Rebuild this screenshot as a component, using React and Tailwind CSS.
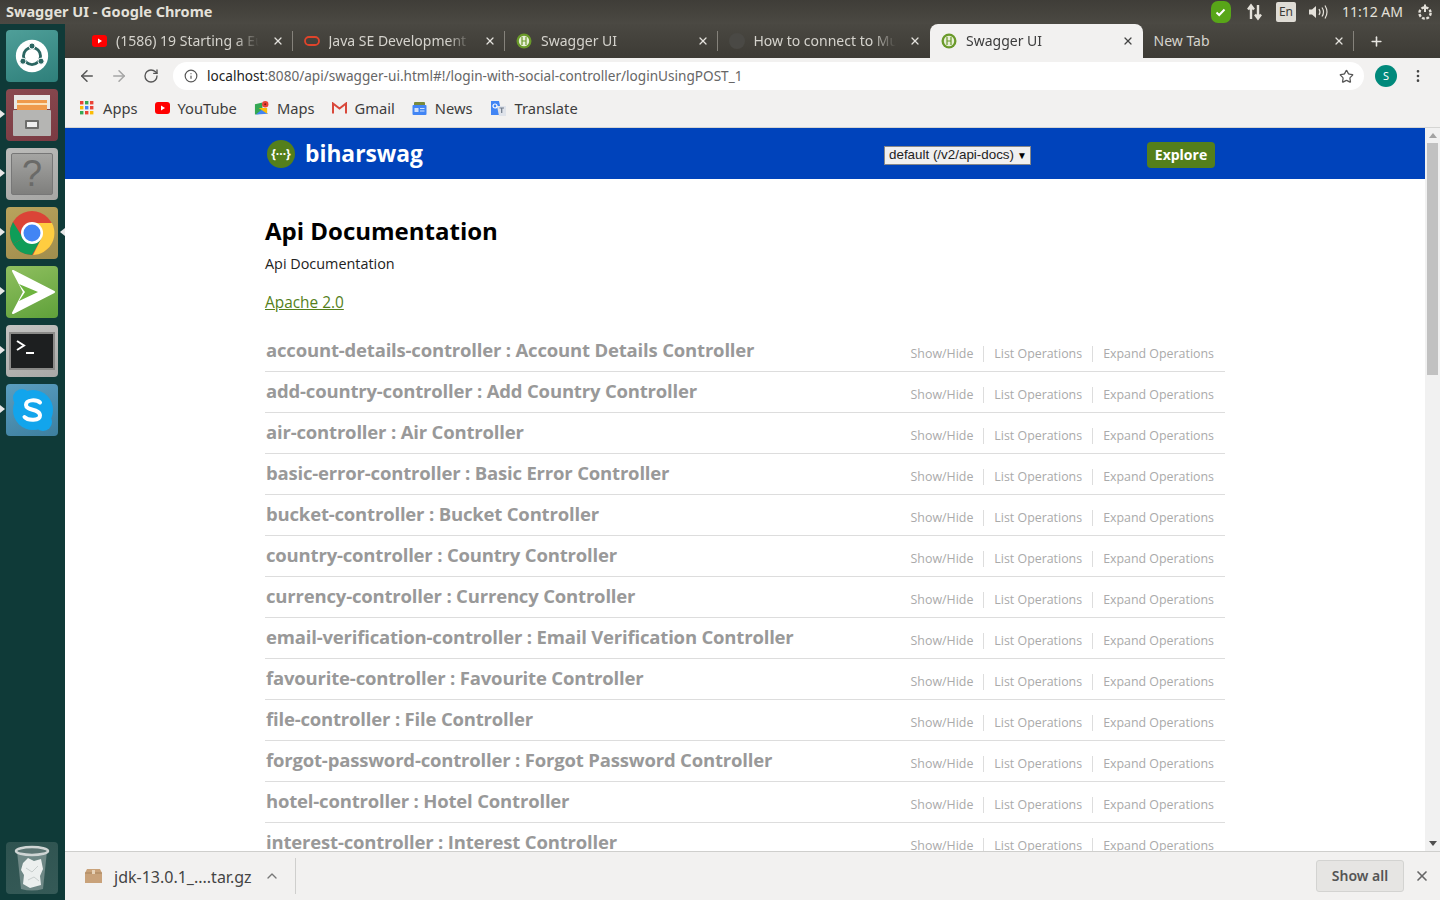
import React from 'react';
import { ArrowLeft, ArrowRight, RotateCw, Info, Star, X, Plus, ChevronUp, MoreVertical } from 'lucide-react';

const uiFont = 'font-["Noto_Sans","Open_Sans",sans-serif]';

const controllers = [
  'account-details-controller : Account Details Controller',
  'add-country-controller : Add Country Controller',
  'air-controller : Air Controller',
  'basic-error-controller : Basic Error Controller',
  'bucket-controller : Bucket Controller',
  'country-controller : Country Controller',
  'currency-controller : Currency Controller',
  'email-verification-controller : Email Verification Controller',
  'favourite-controller : Favourite Controller',
  'file-controller : File Controller',
  'forgot-password-controller : Forgot Password Controller',
  'hotel-controller : Hotel Controller',
  'interest-controller : Interest Controller',
];

const SwaggerIcon = ({ size = 16 }) => (
  <svg width={size} height={size} viewBox="0 0 16 16" className="shrink-0">
    <circle cx="8" cy="8" r="7.5" fill="#6a9a2a" />
    <circle cx="8" cy="8" r="5.2" fill="#e8efd8" />
    <path d="M6 4v8M10 4v8M6 8h4" stroke="#6a9a2a" strokeWidth="1.2" fill="none" />
  </svg>
);

const Tab = ({ icon, title, active, noSep }) => (
  <div
    className={`relative flex items-center h-[34px] w-[212.5px] shrink-0 pl-[11px] pr-[9px] ${
      active ? 'bg-[#f2f1f0] rounded-t-[8px] text-[#3c3c3c]' : 'text-[#d5d3cd]'
    }`}
  >
    {icon}
    <span className="ml-[9px] flex-1 overflow-hidden whitespace-nowrap pb-[2px] text-[14px] [mask-image:linear-gradient(to_right,black_80%,transparent_96%)]">
      {title}
    </span>
    <X size={12} strokeWidth={2.5} className={`ml-[7px] ${active ? 'text-[#444]' : 'text-[#e4e2dd]'}`} />
    {!noSep && <div className="absolute right-0 top-[7px] h-[20px] w-px bg-[#85827b]" />}
  </div>
);

const LauncherTile = ({ from, to, pipRight, pip = true, children }) => (
  <div className="relative flex h-[52px] pl-[6px]">
    {pip && (
      <div className="absolute left-0 top-[21px] h-0 w-0 border-y-[4px] border-l-[5px] border-y-transparent border-l-[#e8e8e8]" />
    )}
    {pipRight && (
      <div className="absolute right-0 top-[21px] h-0 w-0 border-y-[4px] border-r-[5px] border-y-transparent border-r-[#e8e8e8]" />
    )}
    <div
      className="flex h-[52px] w-[52px] items-center justify-center overflow-hidden rounded-[4px]"
      style={{ background: `linear-gradient(160deg, ${from}, ${to})` }}
    >
      {children}
    </div>
  </div>
);

const Launcher = () => (
  <aside className="flex w-[65px] shrink-0 flex-col bg-[#0f3a38] pt-[6px]">
    <div className="flex flex-1 flex-col gap-[7px]">
      <LauncherTile from="#4f9f99" to="#2e7f7a" pip={false}>
        <svg width="38" height="38" viewBox="0 0 40 40">
          <circle cx="20" cy="20" r="17" fill="#fff" />
          <circle cx="20" cy="20" r="9" fill="none" stroke="#2b6662" strokeWidth="3" />
          <circle cx="20" cy="9.5" r="3.2" fill="#2b6662" stroke="#fff" />
          <circle cx="10.5" cy="25.5" r="3.2" fill="#2b6662" stroke="#fff" />
          <circle cx="29.5" cy="25.5" r="3.2" fill="#2b6662" stroke="#fff" />
        </svg>
      </LauncherTile>
      <LauncherTile from="#8a4a50" to="#7a3a42">
        <svg width="46" height="46" viewBox="0 0 46 46">
          <rect x="5" y="3" width="36" height="14" fill="#e8e8e6" />
          <rect x="8" y="8" width="30" height="10" fill="#ef9a4c" />
          <rect x="8" y="11" width="30" height="2" fill="#fbe0b8" />
          <rect x="4" y="18" width="38" height="26" rx="1" fill="#b5b5b3" />
          <rect x="16" y="28" width="14" height="9" rx="1" fill="#6d6d6b" />
          <rect x="18" y="30" width="10" height="5" fill="#efefef" />
        </svg>
      </LauncherTile>
      <LauncherTile from="#bcbcba" to="#a6a6a4">
        <div className="flex h-[42px] w-[42px] items-center justify-center rounded-[2px] border border-[#777] bg-gradient-to-b from-[#a5a5a3] to-[#7f7f7d] font-['Liberation_Sans',sans-serif] text-[36px] leading-none text-[#6a6a68]">
          ?
        </div>
      </LauncherTile>
      <LauncherTile from="#b9a35c" to="#a08d4d" pipRight>
        <svg width="46" height="46" viewBox="0 0 46 46">
          <circle cx="23" cy="23" r="22" fill="#db4437" />
          <path d="M23 23 L4 34 A22 22 0 0 0 23 45 L35 24 Z" fill="#0f9d58" />
          <path d="M4 34 A22 22 0 0 1 4 12 L14 28 Z" fill="#0f9d58" />
          <path d="M23 13 H43 A22 22 0 0 1 24 45 L33 27 Z" fill="#ffcd40" />
          <circle cx="23" cy="23" r="11" fill="#fff" />
          <circle cx="23" cy="23" r="8.5" fill="#4285f4" />
        </svg>
      </LauncherTile>
      <LauncherTile from="#8fbf5f" to="#5fa13a">
        <svg width="48" height="46" viewBox="0 0 48 46">
          <path d="M5 2 L46 23 L5 44 L16 23 Z" fill="#fff" stroke="#fff" strokeWidth="2" strokeLinejoin="round" />
          <path d="M11 15 L30 23 L11 32 L17 23 Z" fill="#6eb43f" />
        </svg>
      </LauncherTile>
      <LauncherTile from="#c4c4c2" to="#a8a8a6">
        <div className="h-[38px] w-[46px] border-2 border-[#8a8a88] bg-[#1d1f20] px-[5px] pt-[5px]">
          <svg width="30" height="22" viewBox="0 0 30 22">
            <path d="M1 2 L8 6.5 L1 11" stroke="#fff" strokeWidth="2" fill="none" />
            <path d="M10 14 H18" stroke="#fff" strokeWidth="2" />
          </svg>
        </div>
      </LauncherTile>
      <LauncherTile from="#5a9ec0" to="#3d7f9f">
        <svg width="46" height="46" viewBox="0 0 46 46">
          <circle cx="24" cy="23" r="20" fill="#12a5ec" />
          <circle cx="13" cy="11" r="9" fill="#12a5ec" />
          <circle cx="34" cy="35" r="9" fill="#12a5ec" />
          <path
            d="M31 15.5 C28 12.5 17 12 17 18 C17 24 31 21.5 31 28.5 C31 34 19 34 15.5 30"
            stroke="#fff"
            strokeWidth="4"
            strokeLinecap="round"
            fill="none"
          />
        </svg>
      </LauncherTile>
    </div>
    <div className="mb-[6px]">
      <LauncherTile from="#2f5350" to="#355a57" pip={false}>
        <svg width="40" height="48" viewBox="0 0 40 48">
          <path d="M5 7 H35 L31 45 Q20 48 9 45 Z" fill="#6f8886" />
          <ellipse cx="20" cy="7" rx="16" ry="4" fill="#5c7573" stroke="#cfd5d4" strokeWidth="2.5" />
          <path d="M11 19 L16 14 L22 17 L29 15 L31 25 L28 32 L29 41 L18 44 L11 40 L12 31 L9 26 Z" fill="#ecefee" />
          <path d="M14 24 L20 28 L26 22 M16 36 L22 33 L27 37" stroke="#c8cecd" fill="none" />
        </svg>
      </LauncherTile>
    </div>
  </aside>
);

const Bookmark = ({ icon, label }) => (
  <div className="flex items-center gap-[8px]">
    {icon}
    <span className="text-[14.7px] text-[#3d3d3d]">{label}</span>
  </div>
);

const Bookmarks = () => (
  <div className="flex h-[33px] items-center gap-[17px] pb-[4px] pl-[15px]">
    <Bookmark
      label="Apps"
      icon={
        <svg width="15" height="14" viewBox="0 0 15 14">
          {[0, 5, 10].map((y, r) =>
            [0, 5, 10].map((x, c) => (
              <rect
                key={`${r}${c}`}
                x={x}
                y={y}
                width="3.4"
                height="3.4"
                fill={['#ea4335', '#fbbc05', '#34a853', '#4285f4', '#ea4335'][(r + c * 2) % 5]}
              />
            ))
          )}
        </svg>
      }
    />
    <Bookmark
      label="YouTube"
      icon={
        <svg width="15" height="12" viewBox="0 0 15 12">
          <rect width="15" height="12" rx="3" fill="#f00" />
          <path d="M6 3.5 L10 6 L6 8.5 Z" fill="#fff" />
        </svg>
      }
    />
    <Bookmark
      label="Maps"
      icon={
        <svg width="15" height="16" viewBox="0 0 16 16">
          <path d="M1 4 L9 2 V14 L1 15 Z" fill="#34a853" />
          <path d="M9 9 L15 14 L2 15 Z" fill="#4285f4" />
          <path d="M5 8 L14 14 V8 Z" fill="#fbbc05" />
          <circle cx="12" cy="4" r="3.4" fill="#ea4335" />
          <circle cx="12" cy="4" r="1.1" fill="#7a1d16" />
        </svg>
      }
    />
    <Bookmark
      label="Gmail"
      icon={
        <svg width="15" height="12" viewBox="0 0 15 12">
          <path d="M1 11.5 V1.5 L7.5 6.5 L14 1.5 V11.5" fill="none" stroke="#d9483b" strokeWidth="2" />
        </svg>
      }
    />
    <Bookmark
      label="News"
      icon={
        <svg width="15" height="15" viewBox="0 0 15 15">
          <rect x="2" y="1" width="11" height="5" rx="1" fill="#7a8a3a" />
          <rect x="0.5" y="4" width="14" height="10" rx="1" fill="#4285f4" />
          <rect x="2.5" y="7" width="4" height="4" fill="#cfe0fb" />
          <path d="M8 7.5h4.5M8 10h4.5" stroke="#cfe0fb" />
        </svg>
      }
    />
    <Bookmark
      label="Translate"
      icon={
        <svg width="17" height="17" viewBox="0 0 17 17">
          <path d="M1 1 H9 L12 15 H1 Z" fill="#4285f4" />
          <path d="M7 6 H16 V16 H9 Z" fill="#dfe3ea" />
          <path d="M9.5 8 H14 M11.7 8 V13" stroke="#6f7a8a" strokeWidth="1.2" />
          <circle cx="5" cy="6" r="2" fill="none" stroke="#fff" strokeWidth="1.2" />
        </svg>
      }
    />
  </div>
);

const Chrome = () => (
  <div className={`shrink-0 ${uiFont}`}>
    <div className="flex h-[34px] items-end bg-gradient-to-b from-[#4a4842] to-[#3d3b35] pl-[15px]">
      <Tab
        title="(1586) 19 Starting a Eu"
        icon={
          <svg width="15" height="12" viewBox="0 0 15 12" className="ml-[1px] shrink-0">
            <rect width="15" height="12" rx="3" fill="#f00" />
            <path d="M6 3.5 L10 6 L6 8.5 Z" fill="#fff" />
          </svg>
        }
      />
      <Tab
        title="Java SE Development"
        icon={
          <svg width="16" height="12" viewBox="0 0 16 12" className="shrink-0">
            <rect x="1" y="2" width="14" height="8" rx="4" fill="none" stroke="#e0442b" strokeWidth="1.8" />
          </svg>
        }
      />
      <Tab title="Swagger UI" icon={<SwaggerIcon />} />
      <Tab
        title="How to connect to Mu"
        noSep
        icon={<div className="h-[16px] w-[16px] shrink-0 rounded-full bg-[#4a4945]" />}
      />
      <Tab title="Swagger UI" active noSep icon={<SwaggerIcon />} />
      <div className="relative flex h-[34px] w-[211px] shrink-0 items-center pl-[11px] pr-[9px] text-[#d5d3cd]">
        <span className="flex-1 pb-[2px] text-[14px]">New Tab</span>
        <X size={12} strokeWidth={2.5} className="text-[#e4e2dd]" />
        <div className="absolute right-0 top-[7px] h-[20px] w-px bg-[#85827b]" />
      </div>
      <div className="flex h-[34px] w-[46px] items-center justify-center">
        <Plus size={15} strokeWidth={2.5} className="text-[#e8e6e1]" />
      </div>
    </div>
    <div className="bg-[#f2f1f0]">
      <div className="flex h-[36px] items-center pl-[13px] pr-[14px]">
        <ArrowLeft size={18} strokeWidth={2} className="text-[#555]" />
        <ArrowRight size={18} strokeWidth={2} className="ml-[14px] text-[#a5a5a5]" />
        <RotateCw size={16} strokeWidth={2} className="ml-[15px] text-[#555]" />
        <div className="ml-[14px] flex h-[28px] w-[1191px] items-center rounded-full bg-white pl-[11px] pr-[10px]">
          <Info size={14} className="text-[#555]" />
          <span className="ml-[9px] flex-1 whitespace-nowrap text-[13.6px] text-[#666]">
            <span className="text-[#222]">localhost</span>:8080/api/swagger-ui.html#!/login-with-social-controller/loginUsingPOST_1
          </span>
          <Star size={15} className="text-[#555]" />
        </div>
        <div className="ml-[11px] flex h-[22px] w-[22px] items-center justify-center rounded-full bg-[#00897b] text-[11px] text-white">
          S
        </div>
        <MoreVertical size={16} className="ml-[13px] text-[#444]" />
      </div>
      <Bookmarks />
    </div>
  </div>
);

const ControllerRow = ({ name, last }) => (
  <li className={`flex h-[41px] items-start justify-between pl-px pr-[11px] ${last ? '' : 'border-b border-[#dddddd]'}`}>
    <h2 className="mt-[5px] whitespace-nowrap text-[18.5px] font-bold leading-[28px] tracking-[-0.18px] text-[#999999]">{name}</h2>
    <ul className="mt-[15px] flex items-center text-[12.4px] leading-[16px] text-[#aaaaaa]">
      <li className="border-r border-[#dddddd] pr-[10px]">Show/Hide</li>
      <li className="border-r border-[#dddddd] px-[10px]">List Operations</li>
      <li className="pl-[10px]">Expand Operations</li>
    </ul>
  </li>
);

const SwaggerPage = () => (
  <div className="flex min-h-0 flex-1 overflow-hidden border-t border-[#d5d5d3] bg-white font-['Open_Sans',sans-serif]">
    <div className="min-w-0 flex-1 overflow-hidden">
      <header className="h-[51px] bg-[#0043bb]">
        <div className="mx-auto flex h-full w-[960px] items-center">
          <div className="ml-[2px] flex h-[28px] w-[28px] items-center justify-center rounded-full bg-[#547f1b] text-[12px] font-bold text-white">
            {'{···}'}
          </div>
          <span className="ml-[10px] mt-[2px] text-[22.8px] font-bold text-white">biharswag</span>
          <div className="ml-[461px] mt-[4px] flex h-[19px] w-[147px] items-center whitespace-nowrap border border-[#888] bg-[#f0f0f0] pl-[4px] font-['Liberation_Sans',sans-serif] text-[13.4px] text-[#222]">
            default (/v2/api-docs)
            <span className="ml-[3px] text-[10px] leading-none text-black">▼</span>
          </div>
          <button className="ml-[116px] mt-[2px] h-[26px] w-[68px] rounded-[4px] bg-[#547f1b] text-[14px] font-bold text-white">
            Explore
          </button>
        </div>
      </header>
      <main className="mx-auto w-[960px] pt-[34px]">
        <h1 className="text-[24px] font-bold leading-[36px] text-black">Api Documentation</h1>
        <p className="mt-[5px] text-[14.4px] leading-[20px] text-[#222]">Api Documentation</p>
        <a className="mt-[17px] block text-[15.4px] leading-[24px] text-[#547f1b] underline">Apache 2.0</a>
        <ul className="mt-[16px]">
          {controllers.map((name, i) => (
            <ControllerRow key={name} name={name} last={i === controllers.length - 1} />
          ))}
        </ul>
      </main>
    </div>
    <div className="flex w-[15px] shrink-0 flex-col items-center bg-[#f1f1f1]">
      <div className="mt-[5px] h-0 w-0 border-x-[4px] border-b-[5px] border-x-transparent border-b-[#a3a3a3]" />
      <div className="mt-[5px] h-[232px] w-[11px] bg-[#c1c1c1]" />
      <div className="mt-auto mb-[5px] h-0 w-0 border-x-[4px] border-t-[5px] border-x-transparent border-t-[#505050]" />
    </div>
  </div>
);

const DownloadBar = () => (
  <div className={`flex h-[49px] shrink-0 items-center border-t border-[#cfcfcd] bg-[#f2f1f0] pl-[20px] pr-[10px] ${uiFont}`}>
    <svg width="17" height="14" viewBox="0 0 17 14">
      <path d="M2 0 H15 L17 4 V14 H0 V4 Z" fill="#c9a27a" />
      <path d="M0 4 H17" stroke="#a8855f" />
      <rect x="7" y="1" width="3" height="4" fill="#e7d2b8" />
    </svg>
    <span className="ml-[12px] pt-[2px] text-[16px] text-[#444]">jdk-13.0.1_....tar.gz</span>
    <ChevronUp size={16} className="ml-[12px] text-[#777]" />
    <div className="ml-[15px] h-[36px] w-px bg-[#cfcfcd]" />
    <button className="ml-auto h-[32px] w-[88px] rounded-[3px] border border-[#d3d3d1] bg-[#e6e5e3] pb-[1px] text-[14px] font-semibold text-[#555]">
      Show all
    </button>
    <X size={16} strokeWidth={2.5} className="ml-[10px] text-[#666]" />
  </div>
);

const TopPanel = () => (
  <div className={`flex h-[24px] shrink-0 items-center justify-between bg-gradient-to-b from-[#3f3d38] to-[#4b4943] pl-[6px] pr-[6px] text-[#e4e1da] ${uiFont}`}>
    <span className="pb-[1px] text-[14.5px] font-bold">Swagger UI - Google Chrome</span>
    <div className="flex items-center">
      <div className="flex h-[22px] w-[20px] items-center justify-center rounded-[7px] bg-[#58a618]">
        <svg width="11" height="9" viewBox="0 0 11 9">
          <path d="M1.5 4.5 L4.2 7 L9.5 1.5" stroke="#fff" strokeWidth="2" fill="none" />
        </svg>
      </div>
      <svg width="18" height="18" viewBox="0 0 18 18" className="ml-[15px]">
        <path d="M5 16 V3 M2 6.5 L5 2.5 L8 6.5" stroke="#e4e1da" strokeWidth="2.4" fill="none" />
        <path d="M12 2 V15 M9 11.5 L12 15.5 L15 11.5" stroke="#e4e1da" strokeWidth="2.4" fill="none" />
      </svg>
      <div className="ml-[12px] flex h-[20px] w-[20px] items-center justify-center rounded-[2px] bg-[#dfdcd5] text-[12px] text-[#3c3b37]">
        En
      </div>
      <svg width="22" height="16" viewBox="0 0 22 16" className="ml-[12px]">
        <path d="M1 5.5 H4 L8 2 V14 L4 10.5 H1 Z" fill="#e4e1da" />
        <path d="M11 5 Q13 8 11 11 M14 3.5 Q17 8 14 12.5 M17 1.5 Q21 8 17 14.5" stroke="#e4e1da" strokeWidth="1.2" fill="none" />
      </svg>
      <span className="ml-[12px] pb-[2px] text-[14px]">11:12 AM</span>
      <svg width="18" height="18" viewBox="0 0 18 18" className="ml-[13px]">
        <circle cx="9" cy="10" r="5.6" fill="none" stroke="#e4e1da" strokeWidth="2.4" strokeDasharray="2.8 1.6" />
        <path d="M9 1.5 V9" stroke="#e4e1da" strokeWidth="2" />
      </svg>
    </div>
  </div>
);

export default function App() {
  return (
    <div className="flex h-screen w-[1440px] flex-col overflow-hidden">
      <TopPanel />
      <div className="flex min-h-0 flex-1">
        <Launcher />
        <div className="flex min-w-0 flex-1 flex-col">
          <Chrome />
          <SwaggerPage />
          <DownloadBar />
        </div>
      </div>
    </div>
  );
}
